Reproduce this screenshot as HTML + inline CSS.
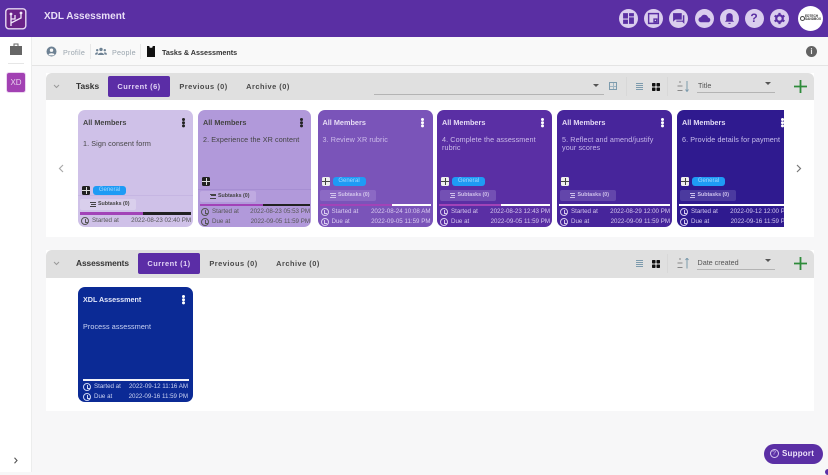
<!DOCTYPE html>
<html><head><meta charset="utf-8">
<style>
*{box-sizing:border-box;margin:0;padding:0}
html,body{width:828px;height:472px;overflow:hidden;background:#f7f7f8;font-family:"Liberation Sans",sans-serif;color:#333}
.a{position:absolute}
.t{position:absolute;white-space:nowrap}
.circ{position:absolute;top:9px;width:19px;height:19px;border-radius:50%;background:#dacdee}
.circ svg{position:absolute;left:3px;top:3px;width:13px;height:13px}
.sec{position:absolute;left:46px;width:768px;background:#fff}
.hd{position:absolute;left:0;top:0;width:768px;height:27px;background:#e0e0e0;border-radius:6px 6px 0 0}
.card{position:absolute;width:115px;height:116.500px;border-radius:7px;overflow:hidden}
.card .mem{position:absolute;left:5px;top:7.500px;font-size:7.300px;font-weight:bold;white-space:nowrap}
.card .dots{position:absolute;left:103.500px;top:8px;width:3px;height:3px;border-radius:50%;background:currentColor;box-shadow:0 3.200px 0 currentColor,0 6.400px 0 currentColor}
.card .ttl{position:absolute;left:5px;font-size:7.200px;line-height:8.700px;width:106px;letter-spacing:.1px}
.card .ic{position:absolute;left:4px;top:66.500px;width:8px;height:9px;border-radius:1.500px}
.ic.dk{background:#222 linear-gradient(#ddd,#ddd) center/100% 1px no-repeat}
.ic.dk::after,.ic.lt::after{content:"";position:absolute;left:3.500px;top:1px;width:1px;height:7px}
.ic.dk::after{background:#ddd}
.ic.lt{background:#eee linear-gradient(#444,#444) center/100% 1px no-repeat}
.ic.lt::after{background:#444}
.card .gen{position:absolute;left:15px;top:66.500px;width:33px;height:9px;border-radius:3px;background:#1e9bf5;color:#9fd6fc;font-size:6px;line-height:9.500px;text-align:center}
.card .sub{position:absolute;left:2.500px;top:80px;height:11px;width:56px;border-radius:2px;font-size:5.300px;font-weight:bold;line-height:11px;padding-left:18px;white-space:nowrap}
.card .sub i{position:absolute;left:10px;top:3px;width:5.500px;height:5px;border-top:1.300px solid currentColor;border-bottom:1.300px solid currentColor}
.card .sub i::after{content:"";position:absolute;left:1px;right:0;top:.600px;height:1.200px;background:currentColor}
.card .bar{position:absolute;left:2px;top:93.500px;width:111px;height:2.500px}
.card .bar b{position:absolute;left:0;top:0;height:100%;background:#a243b8}
.row{position:absolute;left:3px;width:110px;font-size:6.200px;height:8px;line-height:8px;white-space:nowrap}
.row u{position:absolute;left:0;top:0;width:8px;height:8px;border:1.100px solid currentColor;border-radius:50%}
.row u::after{content:"";position:absolute;left:2.600px;top:1px;width:2px;height:2.500px;border-left:.8px solid currentColor;border-bottom:.8px solid currentColor}
.row span{position:absolute;left:11px}
.row em{position:absolute;right:0;font-style:normal}
.tab{position:absolute;top:3px;height:21px;font-size:7.400px;font-weight:bold;letter-spacing:.5px;line-height:21px;text-align:center;color:#484848}
.tab.on{background:#5b2da6;color:#e2d4f6;border-radius:2px}
</style></head><body>

<!-- header -->
<div class="a" style="left:0;top:0;width:828px;height:37px;background:#5a2fa3"></div>
<svg class="a" style="left:5px;top:8px" width="22" height="22" viewBox="0 0 22 22"><rect x=".8" y=".8" width="20" height="20" rx="3" fill="#6a2388" stroke="#e6d8f2" stroke-width="1.400"/><path d="M6 18V7M6 15L16 10V5M6 11h4V7" fill="none" stroke="#f2e8fa" stroke-width="1.300"/><circle cx="6" cy="6" r="1.400" fill="#f2e8fa"/><circle cx="16" cy="5" r="1.400" fill="#f2e8fa"/></svg>
<div class="t" style="left:44px;top:11px;font-size:10px;font-weight:bold;color:#e9dff7">XDL Assessment</div>

<div class="circ" style="left:619px"><svg viewBox="0 0 12 12"><path d="M1 1h4.500v5H1zM6.500 1H11v3H6.500zM1 7h4.500v4H1zM6.500 5H11v6H6.500z" fill="#5a2fa3"/></svg></div>
<div class="circ" style="left:644px"><svg viewBox="0 0 12 12"><path d="M1.500 1.500h9v9h-9zM6.500 6.500h2.500v2.500H6.500z" fill="none" stroke="#5a2fa3" stroke-width="1.300"/></svg></div>
<div class="circ" style="left:669px"><svg viewBox="0 0 12 12"><path d="M1 1h8v6H3L1 9zM10 3h1.400v8L9.500 9H4V8h6z" fill="#5a2fa3"/></svg></div>
<div class="circ" style="left:694.500px"><svg viewBox="0 0 12 12"><path d="M3 9.500a2.400 2.400 0 0 1-.3-4.800 3.500 3.500 0 0 1 6.600.4 2.200 2.200 0 0 1-.3 4.400z" fill="#5a2fa3"/></svg></div>
<div class="circ" style="left:719.500px"><svg viewBox="0 0 12 12"><path d="M6 1a3 3 0 0 1 3 3v3.500l1.200 1.500H1.800L3 7.500V4a3 3 0 0 1 3-3zM5 10h2v1H5z" fill="#5a2fa3"/></svg></div>
<div class="circ" style="left:744.500px;text-align:center;font-size:12px;font-weight:bold;line-height:19px;color:#5a2fa3">?</div>
<div class="circ" style="left:770px"><svg viewBox="0 0 12 12"><circle cx="6" cy="6" r="3" fill="none" stroke="#5a2fa3" stroke-width="2"/><path d="M6 .8v2M6 9.200v2M1.500 3.400l1.700 1M8.800 7.600l1.700 1M1.500 8.600l1.700-1M8.800 4.400l1.700-1" stroke="#5a2fa3" stroke-width="2"/></svg></div>
<div class="a" style="left:798px;top:6px;width:25px;height:25px;border-radius:50%;background:#fff"></div>
<div class="a" style="left:799.500px;top:15.500px;width:5px;height:5px;border:1px solid #444;border-radius:50%"></div>
<div class="t" style="left:805px;top:15px;font-size:3.200px;line-height:3.200px;font-weight:bold;color:#333">EDTECH<br>SANDBOX</div>

<!-- sidebar -->
<div class="a" style="left:0;top:37px;width:32px;height:435px;background:#fff;border-right:1px solid #eceded"></div>
<svg class="a" style="left:9px;top:42px" width="14" height="14" viewBox="0 0 14 14"><path d="M1 4h12v9H1zM4.500 4V1.500h5V4" fill="#666"/><path d="M5.500 2.500h3V4h-3z" fill="#fff"/></svg>
<div class="a" style="left:8px;top:63px;width:16px;height:1px;background:#e6e6e6"></div>
<div class="a" style="left:7px;top:73px;width:18px;height:19px;background:#a241b3;border-radius:2px;box-shadow:0 0 0 1px #ecd5f0;color:#e6d0ec;font-size:8px;line-height:19px;text-align:center">XD</div>
<svg class="a" style="left:13px;top:457px" width="6" height="7" viewBox="0 0 6 7"><path d="M1.500 .8l2.500 2.700-2.500 2.700" fill="none" stroke="#555" stroke-width="1.100"/></svg>

<!-- breadcrumb -->
<div class="a" style="left:32px;top:37px;width:796px;height:29px;background:#f9f9f9;border-bottom:1px solid #e4e4e4"></div>
<svg class="a" style="left:46px;top:46px" width="11" height="11" viewBox="0 0 11 11"><circle cx="5.500" cy="5.500" r="5" fill="#6d8193"/><circle cx="5.500" cy="4.200" r="1.700" fill="#f9f9f9"/><path d="M2.400 8.400c1.400-1.600 4.800-1.600 6.200 0l-1 1H3.400z" fill="#f9f9f9"/></svg>
<div class="t" style="left:63px;top:47.500px;font-size:7.200px;color:#9aa5ae;letter-spacing:.25px">Profile</div>
<div class="a" style="left:90px;top:44px;width:1px;height:15px;background:#e8e8e8"></div>
<svg class="a" style="left:95px;top:47px" width="12" height="9" viewBox="0 0 12 9"><circle cx="6" cy="2.400" r="1.700" fill="#6d8193"/><circle cx="2.200" cy="3.200" r="1.200" fill="#6d8193"/><circle cx="9.800" cy="3.200" r="1.200" fill="#6d8193"/><path d="M3 8c0-3 6-3 6 0zM0 7.600c0-2 2-2.600 3-2L2.400 7.600zM12 7.600c0-2-2-2.600-3-2l.6 2z" fill="#6d8193"/></svg>
<div class="t" style="left:112px;top:47.500px;font-size:7.200px;color:#9aa5ae;letter-spacing:.25px">People</div>
<div class="a" style="left:140px;top:44px;width:1px;height:15px;background:#e8e8e8"></div>
<svg class="a" style="left:147px;top:46px" width="8" height="11" viewBox="0 0 8 11"><path d="M0 0h2.200l.6 1.800h2.400L5.800 0H8v11H0z" fill="#111"/></svg>
<div class="t" style="left:162px;top:47.500px;font-size:7.200px;font-weight:bold;color:#333">Tasks &amp; Assessments</div>
<div class="a" style="left:806px;top:46px;width:11px;height:11px;border-radius:50%;background:#636363;color:#eee;font-size:8px;font-weight:bold;line-height:11px;text-align:center">i</div>

<!-- Tasks section -->
<div class="sec" style="top:73px;height:164px">
  <div class="hd"></div>
  <svg class="a" style="left:7px;top:11px" width="7" height="5" viewBox="0 0 7 5"><path d="M1 1l2.500 2.500L6 1" fill="none" stroke="#999" stroke-width="1"/></svg>
  <div class="t" style="left:30px;top:8px;font-size:8.400px;font-weight:bold;color:#333">Tasks</div>
  <div class="tab on" style="left:62px;width:62px">Current (6)</div>
  <div class="tab" style="left:124px;width:67px">Previous (0)</div>
  <div class="tab" style="left:191px;width:62px">Archive (0)</div>
  <div class="a" style="left:328px;top:20.500px;width:230px;height:1px;background:#b4b4b4"></div>
  <div class="a" style="left:547px;top:11px;border:3px solid transparent;border-top:3.500px solid #555"></div>
  <div class="a" style="left:563px;top:9px;width:8px;height:8px;border:1px solid #7d9bad;background:linear-gradient(#9fb5c2,#9fb5c2) 0 50%/100% 1px no-repeat,linear-gradient(#9fb5c2,#9fb5c2) 50% 0/1px 100% no-repeat"></div>
  <div class="a" style="left:580px;top:4px;width:1px;height:19px;background:#d8d8d8"></div>
  <div class="a" style="left:590px;top:10px;width:7px;height:7px;background:repeating-linear-gradient(#7d9bad 0 1px,transparent 1px 2px)"></div>
  <svg class="a" style="left:606px;top:9.500px" width="8" height="8" viewBox="0 0 8 8"><rect width="3.500" height="3.500" rx=".7" fill="#111"/><rect x="4.500" width="3.500" height="3.500" rx=".7" fill="#111"/><rect y="4.500" width="3.500" height="3.500" rx=".7" fill="#111"/><rect x="4.500" y="4.500" width="3.500" height="3.500" rx=".7" fill="#111"/></svg>
  <div class="a" style="left:621px;top:4px;width:1px;height:19px;background:#d8d8d8"></div>
  <svg class="a" style="left:631px;top:8px" width="12" height="11" viewBox="0 0 12 11"><path d="M2 1h2M0.500 5h5M0.500 9.500h5" stroke="#888" fill="none"/><path d="M10 0v10M8.500 8.500L10 10.500l1.500-2" stroke="#7d9bad" fill="none"/></svg>
  <div class="t" style="left:652px;top:8px;font-size:7.200px;color:#555">Title</div>
  <div class="a" style="left:651px;top:18.500px;width:78px;height:1px;background:#b4b4b4"></div>
  <div class="a" style="left:719px;top:9px;border:3px solid transparent;border-top:3.500px solid #555"></div>
  <svg class="a" style="left:748px;top:7px" width="13" height="13" viewBox="0 0 13 13"><path d="M6.500 0v13M0 6.500h13" stroke="#2e8b3a" stroke-width="1.800"/></svg>
  <svg class="a" style="left:12px;top:91px" width="6" height="9" viewBox="0 0 6 9"><path d="M5 1L1.500 4.500 5 8" fill="none" stroke="#aaa" stroke-width="1.200"/></svg>
  <svg class="a" style="left:750px;top:91px" width="6" height="9" viewBox="0 0 6 9"><path d="M1 1l3.500 3.500L1 8" fill="none" stroke="#777" stroke-width="1.200"/></svg>
</div>

<!-- Card 1 -->
<div class="card" style="left:78px;top:110px;background:#cfc1e8;color:#444">
  <div class="mem">All Members</div><div class="dots" style="color:#222"></div>
  <div class="ttl" style="top:30px">1. Sign consent form</div>
  <div class="ic dk" style="top:75.500px"></div><div class="gen" style="top:75.500px">General</div>
  <div class="a" style="left:0;top:85px;width:115px;height:1px;background:#c6b6e2"></div>
  <div class="sub" style="left:2px;top:89px;height:10.500px;background:#d9cfec">Subtasks (0)<i></i></div>
  <div class="bar" style="top:102px;background:#222"><b style="width:63px"></b></div>
  <div class="row" style="top:107px;color:#555"><u></u><span>Started at</span><em>2022-08-23 02:40 PM</em></div>
</div>
<!-- Card 2 -->
<div class="card" style="left:198px;top:110px;width:113px;background:#b199da;color:#444">
  <div class="mem">All Members</div><div class="dots" style="color:#222;left:102px"></div>
  <div class="ttl" style="top:25.500px">2. Experience the XR content</div>
  <div class="ic dk"></div>
  <div class="a" style="left:0;top:79px;width:113px;height:1px;background:#a68ed2"></div>
  <div class="sub" style="left:2px;top:80.500px;background:#bfaae1">Subtasks (0)<i></i></div>
  <div class="bar" style="background:#222;width:110px"><b style="width:63px"></b></div>
  <div class="row" style="top:98px;color:#555;width:109px"><u></u><span>Started at</span><em>2022-08-23 05:53 PM</em></div>
  <div class="row" style="top:108px;color:#555;width:109px"><u></u><span>Due at</span><em>2022-09-05 11:59 PM</em></div>
</div>
<!-- Card 3 -->
<div class="card" style="left:317.500px;top:110px;background:#7a54b9;color:#d9ccf0">
  <div class="mem" style="color:#e6dcf5">All Members</div><div class="dots" style="color:#fff"></div>
  <div class="ttl" style="top:25.500px;color:#cdbcea">3. Review XR rubric</div>
  <div class="ic lt"></div><div class="gen">General</div>
  <div class="sub" style="background:#8b69c4;color:#d3c6ec">Subtasks (0)<i></i></div>
  <div class="bar" style="background:#fff"><b style="width:72px"></b></div>
  <div class="row" style="top:98px"><u></u><span>Started at</span><em>2022-08-24 10:08 AM</em></div>
  <div class="row" style="top:108px"><u></u><span>Due at</span><em>2022-09-05 11:59 PM</em></div>
</div>
<!-- Card 4 -->
<div class="card" style="left:437px;top:110px;background:#5a2fa4;color:#d5c8ee">
  <div class="mem" style="color:#e4daf5">All Members</div><div class="dots" style="color:#fff"></div>
  <div class="ttl" style="top:25.500px;color:#cbbbe8">4. Complete the assessment rubric</div>
  <div class="ic lt"></div><div class="gen">General</div>
  <div class="sub" style="background:#7350b4;color:#cfc0ea">Subtasks (0)<i></i></div>
  <div class="bar" style="background:#fff"><b style="width:62px"></b></div>
  <div class="row" style="top:98px"><u></u><span>Started at</span><em>2022-08-23 12:43 PM</em></div>
  <div class="row" style="top:108px"><u></u><span>Due at</span><em>2022-09-05 11:59 PM</em></div>
</div>
<!-- Card 5 -->
<div class="card" style="left:557px;top:110px;background:#47259b;color:#d3c6ec">
  <div class="mem" style="color:#e2d8f4">All Members</div><div class="dots" style="color:#fff"></div>
  <div class="ttl" style="top:25.500px;color:#c6b6ea">5. Reflect and amend/justify your scores</div>
  <div class="ic lt"></div>
  <div class="sub" style="background:#6346ab;color:#cdbfea">Subtasks (0)<i></i></div>
  <div class="bar" style="background:#fff"></div>
  <div class="row" style="top:98px"><u></u><span>Started at</span><em>2022-08-29 12:00 PM</em></div>
  <div class="row" style="top:108px"><u></u><span>Due at</span><em>2022-09-09 11:59 PM</em></div>
</div>
<!-- Card 6 clipped -->
<div class="a" style="left:677px;top:110px;width:107px;height:117px;overflow:hidden">
<div class="card" style="left:0;top:0;background:#2f1a8f;color:#d2c8f0">
  <div class="mem" style="color:#e0daf5">All Members</div><div class="dots" style="color:#fff"></div>
  <div class="ttl" style="top:25.500px;color:#c8bfec">6. Provide details for payment</div>
  <div class="ic lt"></div><div class="gen">General</div>
  <div class="sub" style="background:#4b3a9f;color:#cbc0ec">Subtasks (0)<i></i></div>
  <div class="bar" style="background:#fff"></div>
  <div class="row" style="top:98px"><u></u><span>Started at</span><em>2022-09-12 12:00 PM</em></div>
  <div class="row" style="top:108px"><u></u><span>Due at</span><em>2022-09-16 11:59 PM</em></div>
</div></div>

<!-- Assessments section -->
<div class="sec" style="top:250px;height:161px">
  <div class="hd" style="height:27.500px"></div>
  <svg class="a" style="left:7px;top:11px" width="7" height="5" viewBox="0 0 7 5"><path d="M1 1l2.500 2.500L6 1" fill="none" stroke="#999" stroke-width="1"/></svg>
  <div class="t" style="left:30px;top:8px;font-size:8.400px;font-weight:bold;color:#333;letter-spacing:-.1px">Assessments</div>
  <div class="tab on" style="left:92px;width:62px">Current (1)</div>
  <div class="tab" style="left:154px;width:67px">Previous (0)</div>
  <div class="tab" style="left:221px;width:62px">Archive (0)</div>
  <div class="a" style="left:590px;top:10px;width:7px;height:7px;background:repeating-linear-gradient(#7d9bad 0 1px,transparent 1px 2px)"></div>
  <svg class="a" style="left:606px;top:9.500px" width="8" height="8" viewBox="0 0 8 8"><rect width="3.500" height="3.500" rx=".7" fill="#111"/><rect x="4.500" width="3.500" height="3.500" rx=".7" fill="#111"/><rect y="4.500" width="3.500" height="3.500" rx=".7" fill="#111"/><rect x="4.500" y="4.500" width="3.500" height="3.500" rx=".7" fill="#111"/></svg>
  <div class="a" style="left:621px;top:4px;width:1px;height:19px;background:#d8d8d8"></div>
  <svg class="a" style="left:631px;top:8px" width="12" height="11" viewBox="0 0 12 11"><path d="M2 1h2M0.500 5h5M0.500 9.500h5" stroke="#888" fill="none"/><path d="M10 10.500V.500M8.500 2L10 0l1.500 2" stroke="#7d9bad" fill="none"/></svg>
  <div class="t" style="left:651.500px;top:8px;font-size:7.200px;color:#555">Date created</div>
  <div class="a" style="left:651px;top:18.500px;width:78px;height:1px;background:#b4b4b4"></div>
  <div class="a" style="left:719px;top:9px;border:3px solid transparent;border-top:3.500px solid #555"></div>
  <svg class="a" style="left:748px;top:7px" width="13" height="13" viewBox="0 0 13 13"><path d="M6.500 0v13M0 6.500h13" stroke="#2e8b3a" stroke-width="1.800"/></svg>
</div>

<div class="card" style="left:78px;top:287px;height:115px;background:#0b2a95;color:#ccd4f3">
  <div class="mem" style="color:#e4e8fa;top:7.500px;font-size:7.200px">XDL Assessment</div><div class="dots" style="color:#fff"></div>
  <div class="ttl" style="top:35.500px;color:#cdd6f5">Process assessment</div>
  <div class="bar" style="top:91.500px;left:4.700px;width:106px;background:#f2f2f8"></div>
  <div class="row" style="top:96px;left:5px;width:105px"><u></u><span>Started at</span><em>2022-09-12 11:16 AM</em></div>
  <div class="row" style="top:106px;left:5px;width:105px"><u></u><span>Due at</span><em>2022-09-16 11:59 PM</em></div>
</div>

<!-- Support -->
<div class="a" style="left:764px;top:444px;width:58.500px;height:19.500px;border-radius:10px;background:#5b2fa5"></div>
<div class="a" style="left:769.500px;top:449px;width:9px;height:9px;border:1px solid #d8c8f0;border-radius:50%;color:#d8c8f0;font-size:6.500px;line-height:7px;text-align:center">?</div>
<div class="t" style="left:782px;top:449px;font-size:8px;font-weight:bold;color:#eee4fa;letter-spacing:.2px">Support</div>
<div class="a" style="left:825px;top:469px;width:6px;height:6px;border-radius:50%;background:#5b2fa5"></div>

</body></html>
